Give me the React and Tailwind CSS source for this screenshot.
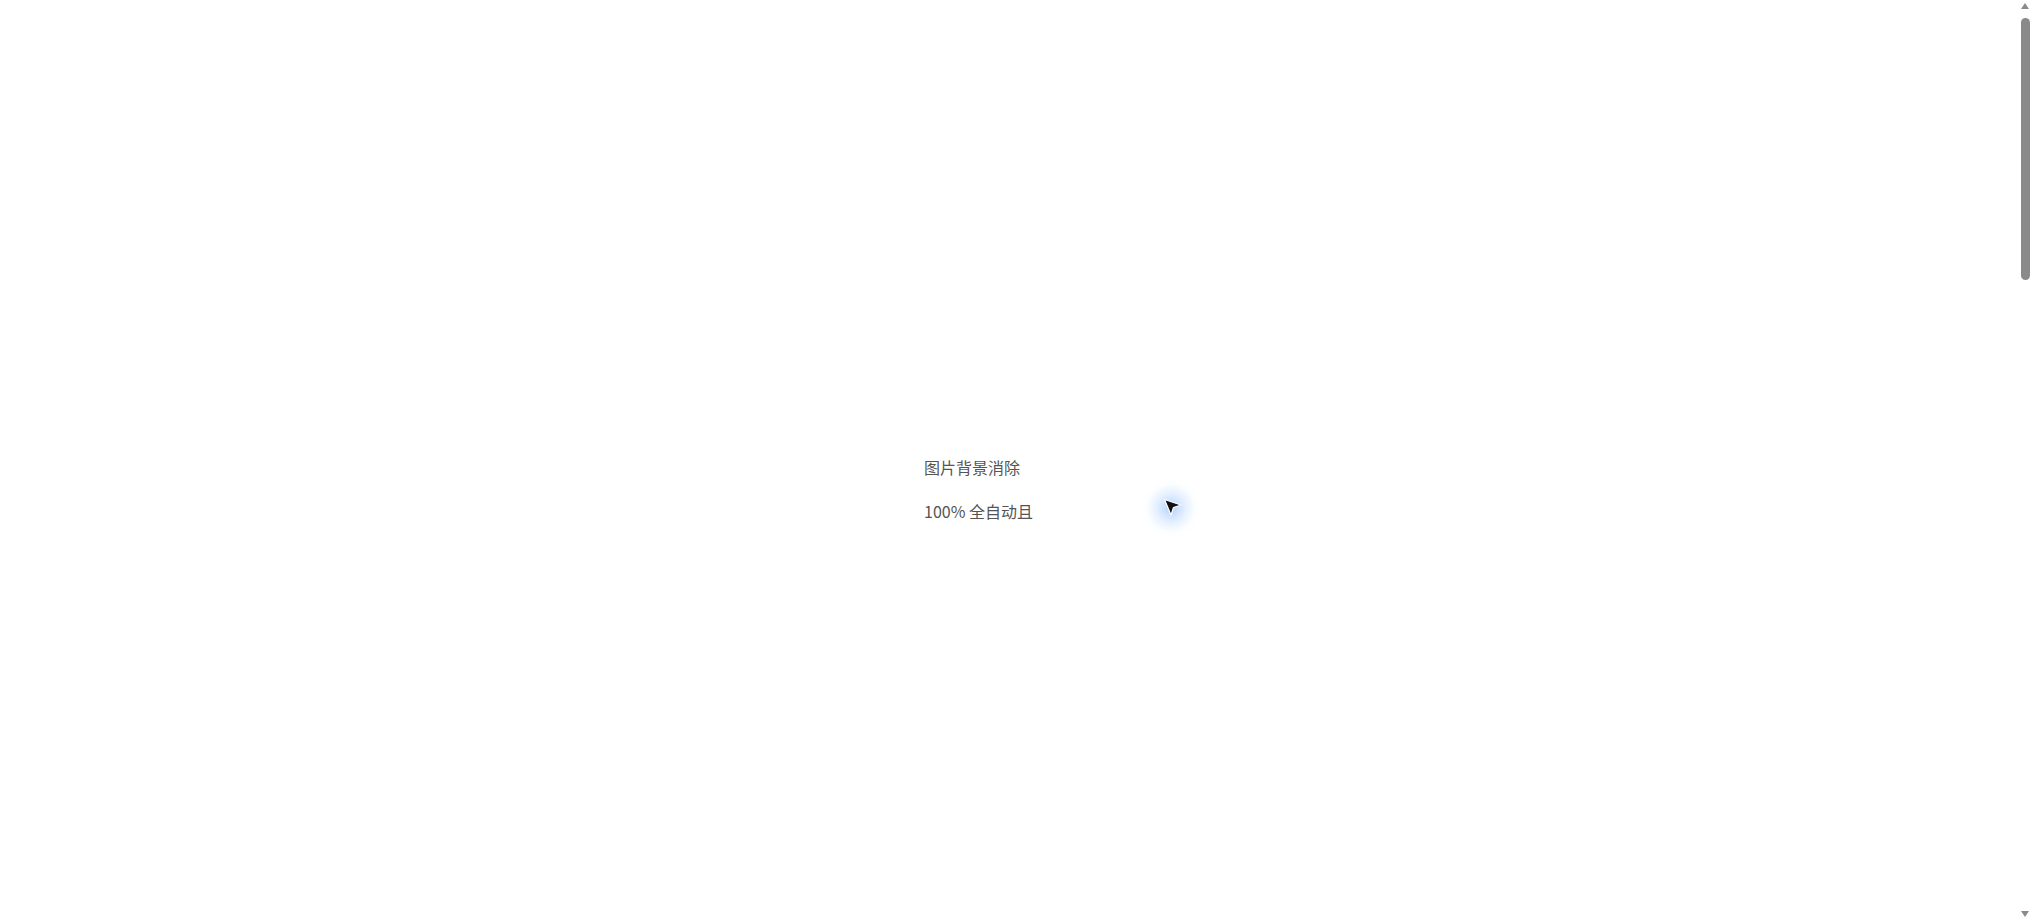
export default function App() {
  return (
    <div className="relative min-h-[3200px] bg-white font-['Noto_Sans_CJK_SC','Noto_Sans',sans-serif] text-[#555]">
      <div className="mx-auto w-[185px] pt-[455px] flex flex-col gap-[20px] text-base leading-6">
        <p>图片背景消除</p>
        <p>100% 全自动且</p>
      </div>

      {/* custom cursor */}
      <div className="absolute left-[1142px] top-[479px] w-[58px] h-[58px] rounded-full bg-[radial-gradient(circle,rgba(110,165,255,0.5)_0%,rgba(150,195,255,0.25)_35%,rgba(210,230,255,0.08)_58%,rgba(255,255,255,0)_72%)]">
        <svg className="absolute left-[21px] top-[19px]" width="20" height="20" viewBox="0 0 20 20">
          <path d="M1.5 1.5 L18 7 L10.5 9.5 L8 17 Z" fill="#111" stroke="#fff" strokeWidth="1.2" strokeLinejoin="round" />
        </svg>
      </div>

      {/* scrollbar */}
      <div className="fixed right-0 top-0 w-[15px] h-[920px] bg-white">
        <div className="absolute left-[3px] top-[3px] w-0 h-0 border-l-[4.5px] border-r-[4.5px] border-b-[6px] border-l-transparent border-r-transparent border-b-[#8a8a8a]" />
        <div className="absolute left-[3px] top-[18px] w-[9px] h-[262px] rounded-full bg-[#8a8a8a]" />
        <div className="absolute left-[3px] bottom-[3px] w-0 h-0 border-l-[4.5px] border-r-[4.5px] border-t-[6px] border-l-transparent border-r-transparent border-t-[#8a8a8a]" />
      </div>
    </div>
  );
}
